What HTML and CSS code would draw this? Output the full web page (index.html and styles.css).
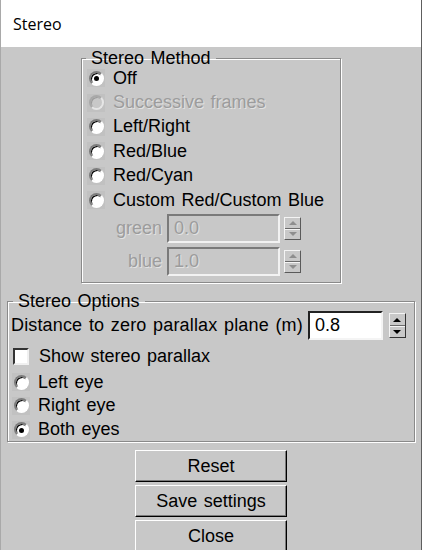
FILE: index.html
```html
<!DOCTYPE html>
<html>
<head>
<meta charset="utf-8">
<link rel="stylesheet" href="styles.css">
</head>
<body>
<div class="window">
  <div class="titlebar">Stereo</div>
  <div class="content">
    <fieldset class="group method">
      <legend>Stereo Method</legend>
      <div class="opt"><span class="box"><span class="radio on"></span></span>Off</div>
      <div class="opt disabled"><span class="box"><span class="radio"></span></span>Successive frames</div>
      <div class="opt"><span class="box"><span class="radio"></span></span>Left/Right</div>
      <div class="opt"><span class="box"><span class="radio"></span></span>Red/Blue</div>
      <div class="opt"><span class="box"><span class="radio"></span></span>Red/Cyan</div>
      <div class="opt"><span class="box"><span class="radio"></span></span>Custom Red/Custom Blue</div>
      <div class="field">
        <span class="flabel">green</span>
        <span class="entry dis wide">0.0</span>
        <span class="spin dis"><span class="up"></span><span class="down"></span></span>
      </div>
      <div class="field">
        <span class="flabel">blue</span>
        <span class="entry dis wide">1.0</span>
        <span class="spin dis"><span class="up"></span><span class="down"></span></span>
      </div>
    </fieldset>

    <fieldset class="group options">
      <legend>Stereo Options</legend>
      <div class="dist">
        <span class="distlabel">Distance to zero parallax plane (m)</span>
        <span class="entry narrow">0.8</span>
        <span class="spin big"><span class="up"></span><span class="down"></span></span>
      </div>
      <div class="chkrow"><span class="check"></span>Show stereo parallax</div>
      <div class="opt small"><span class="box"><span class="radio"></span></span>Left eye</div>
      <div class="opt small"><span class="box"><span class="radio"></span></span>Right eye</div>
      <div class="opt small"><span class="box"><span class="radio on"></span></span>Both eyes</div>
    </fieldset>

    <div class="buttons">
      <button class="btn">Reset</button>
      <button class="btn">Save settings</button>
      <button class="btn">Close</button>
    </div>
  </div>
</div>
</body>
</html>
```

FILE: styles.css
```css
html, body {
  margin: 0;
  padding: 0;
  background: #c8c8c8;
}

.window {
  width: 422px;
  height: 550px;
  overflow: hidden;
  box-sizing: border-box;
  border-left: 1px solid #a9a9a9;
  border-right: 1px solid #5e5e5e;
  background: #c8c8c8;
  font-family: "Liberation Sans", Arial, sans-serif;
  font-size: 18px;
  word-spacing: 1.5px;
  color: #000;
}

.titlebar {
  height: 47px;
  background: #fff;
  display: flex;
  align-items: center;
  padding-left: 12px;
  font-family: "Open Sans", "Noto Sans", sans-serif;
  font-size: 16px;
  word-spacing: 0;
  color: #000;
}

.content {
  display: flex;
  flex-direction: column;
  align-items: center;
  padding-top: 3px;
}

.group {
  margin: 0;
  box-sizing: border-box;
  border: 1px solid #8a8a8a;
  box-shadow: 1px 1px 0 #fff, inset 1px 1px 0 #fff;
  min-width: 0;
}

.group legend {
  padding: 0 5px;
  line-height: 16px;
  height: 16px;
}

.method {
  width: 260px;
  padding: 0 4px 4px 4px;
}

.options {
  width: 408px;
  margin-top: 10px;
  padding: 0 3px 0 3px;
}

.options legend {
  margin-left: 2px;
}

.opt {
  display: flex;
  align-items: center;
  height: 24.4px;
  white-space: nowrap;
}

.opt.small {
  height: 23.7px;
}

.opt.disabled {
  color: #9c9c9c;
  text-shadow: 1px 1px 0 #e2e2e2;
}

.box {
  width: 18px;
  height: 18px;
  background: #c1c1c1;
  display: flex;
  align-items: center;
  justify-content: center;
  margin-left: 1px;
  margin-right: 8px;
  flex: none;
}

.radio {
  width: 11px;
  height: 11px;
  border-radius: 50%;
  border: 2px solid;
  border-color: #7c7c7c #ffffff #ffffff #7c7c7c;
  background: #fff;
  box-shadow: inset 1px 1px 0 #000;
  position: relative;
}

.disabled .radio {
  border-color: #a8a8a8 #e6e6e6 #e6e6e6 #a8a8a8;
  background: #c8c8c8;
  box-shadow: inset 1px 1px 0 #9a9a9a;
}

.radio.on::after {
  content: "";
  position: absolute;
  left: 3.5px;
  top: 3.5px;
  width: 5px;
  height: 5px;
  border-radius: 50%;
  background: #000;
}

.field {
  display: flex;
  align-items: center;
  height: 33px;
}

.flabel {
  width: 76px;
  text-align: right;
  margin-right: 5px;
  color: #9c9c9c;
  text-shadow: 1px 1px 0 #e2e2e2;
}

.entry {
  box-sizing: border-box;
  border: 2px solid;
  border-color: #222 #f4f4f4 #f4f4f4 #222;
  background: #fff;
  display: flex;
  align-items: center;
  padding-left: 5px;
  height: 29px;
}

.entry.dis {
  border-color: #7a7a7a #f2f2f2 #f2f2f2 #7a7a7a;
  background: #c8c8c8;
  color: #9c9c9c;
  text-shadow: 1px 1px 0 #e2e2e2;
}

.entry.wide {
  width: 113px;
}

.entry.narrow {
  width: 75px;
  height: 29px;
  margin-left: 5px;
}

.spin {
  box-sizing: border-box;
  width: 17px;
  height: 23px;
  margin-left: 4px;
  display: flex;
  flex-direction: column;
  border: 1px solid;
  border-color: #f4f4f4 #5a5a5a #5a5a5a #f4f4f4;
  background: #c8c8c8;
}

.spin.big {
  height: 25px;
  margin-left: 6px;
  border-color: #f4f4f4 #333 #333 #f4f4f4;
}

.spin .up, .spin .down {
  flex: 1;
  display: flex;
  align-items: center;
  justify-content: center;
}

.spin .up {
  border-bottom: 1px solid #6a6a6a;
  box-shadow: 0 1px 0 #f4f4f4;
}

.spin .up::after {
  content: "";
  border-left: 4px solid transparent;
  border-right: 4px solid transparent;
  border-bottom: 4px solid #000;
}

.spin .down::after {
  content: "";
  border-left: 4px solid transparent;
  border-right: 4px solid transparent;
  border-top: 4px solid #000;
}

.spin.dis .up::after {
  border-bottom-color: #8e8e8e;
}

.spin.dis .down::after {
  border-top-color: #8e8e8e;
}

.dist {
  display: flex;
  align-items: center;
  height: 33px;
  white-space: nowrap;
}

.distlabel {
  letter-spacing: 0.15px;
}

.chkrow {
  display: flex;
  align-items: center;
  height: 28px;
}

.check {
  box-sizing: border-box;
  width: 16px;
  height: 17px;
  border: 2px solid;
  border-color: #333 #f0f0f0 #f0f0f0 #333;
  background: #fff;
  margin-left: 2px;
  margin-right: 10px;
}

.buttons {
  display: flex;
  flex-direction: column;
  gap: 3px;
  margin-top: 8px;
}

.btn {
  box-sizing: border-box;
  width: 152px;
  height: 32px;
  margin: 0;
  padding: 0;
  font-family: "Liberation Sans", Arial, sans-serif;
  font-size: 18px;
  word-spacing: 1.5px;
  color: #000;
  background: #c8c8c8;
  border: 1px solid;
  border-color: #fff #000 #000 #fff;
  box-shadow: inset -1px -1px 0 #7a7a7a;
}
```
